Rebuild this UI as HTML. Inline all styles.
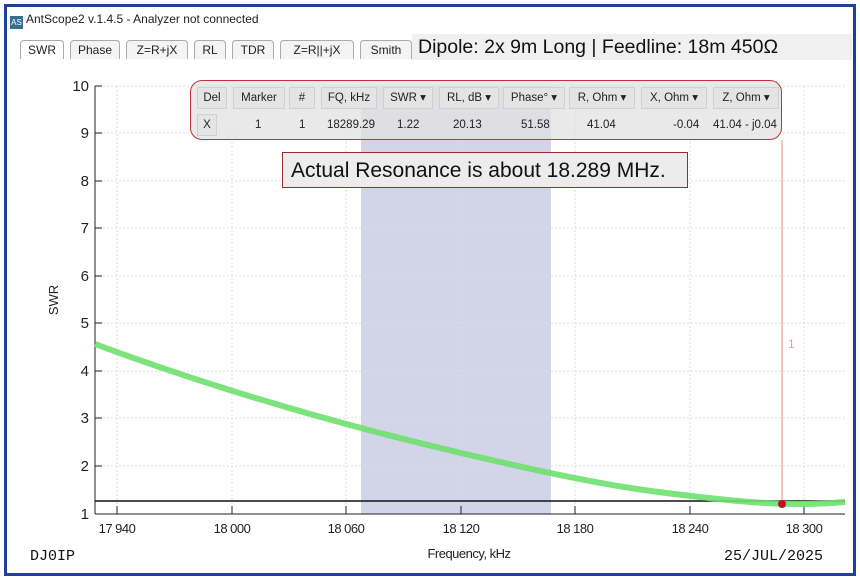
<!DOCTYPE html>
<html><head><meta charset="utf-8"><style>
body{margin:0;width:860px;height:580px;background:#fff;font-family:"Liberation Sans",sans-serif;overflow:hidden;position:relative}
.frame{position:absolute;left:4px;top:4px;width:846px;height:566px;border:3px solid #1f3f99;background:#fff}
.title{position:absolute;left:10px;top:12px;font-size:12px;color:#222}
.ic{display:inline-block;width:13px;height:13px;background:#3a6e8f;color:#fff;font-size:8px;line-height:13px;text-align:center;vertical-align:-2px;margin-right:3px}
.tabs{position:absolute;left:18px;top:40px;height:19px;font-size:12px}
.tab{position:absolute;top:0;height:18px;border:1px solid #aaa;border-bottom:none;border-radius:4px 4px 0 0;background:#f4f4f4;line-height:19px;text-align:center;color:#222}
.head{position:absolute;left:412px;top:34px;width:434px;height:26px;background:#f0f0f0;font-size:19.5px;color:#111;line-height:26px;padding-left:6px;white-space:nowrap;overflow:hidden}
.mt{position:absolute;left:190px;top:80px;width:590px;height:58px;border:1.5px solid #c0303a;border-radius:12px;background:rgba(225,225,225,.75);font-size:11.5px;color:#222}
.h{position:absolute;top:6px;height:20px;background:#e4e4e4;border:1px solid #d0d0d0;line-height:20px;text-align:center}
.v{position:absolute;top:36px;line-height:16px}
.res{position:absolute;left:282px;top:152px;width:406px;height:36px;border:1px solid #9b2a30;background:#ececec;font-size:21px;line-height:36px;padding-left:8px;color:#111;box-sizing:border-box;white-space:nowrap}
.mono{position:absolute;font-family:"Liberation Mono",monospace;font-size:15px;color:#111}
</style></head><body>
<div class="frame"></div>
<div class="title"><span class="ic">AS</span>AntScope2 v.1.4.5 - Analyzer not connected</div>
<div class="tabs">
<div class="tab" style="left:2px;width:42px;background:#fff">SWR</div>
<div class="tab" style="left:52px;width:48px">Phase</div>
<div class="tab" style="left:108px;width:60px">Z=R+jX</div>
<div class="tab" style="left:176px;width:30px">RL</div>
<div class="tab" style="left:214px;width:40px">TDR</div>
<div class="tab" style="left:262px;width:72px">Z=R||+jX</div>
<div class="tab" style="left:342px;width:50px">Smith</div>
</div>
<div class="head">Dipole: 2x 9m Long | Feedline: 18m 450Ω</div>
<svg style="position:absolute;left:0;top:0" width="860" height="580">
<rect x="361" y="86" width="190" height="428" fill="#d2d4e7"/>
<g stroke="#ddd" stroke-dasharray="2,2" stroke-width="1">
<line x1="95" x2="845" y1="86" y2="86"/><line x1="95" x2="845" y1="133" y2="133"/><line x1="95" x2="845" y1="181" y2="181"/><line x1="95" x2="845" y1="228" y2="228"/><line x1="95" x2="845" y1="276" y2="276"/><line x1="95" x2="845" y1="323" y2="323"/><line x1="95" x2="845" y1="371" y2="371"/><line x1="95" x2="845" y1="418" y2="418"/><line x1="95" x2="845" y1="466" y2="466"/>
<line x1="117" x2="117" y1="86" y2="514"/><line x1="232" x2="232" y1="86" y2="514"/><line x1="346" x2="346" y1="86" y2="514"/><line x1="461" x2="461" y1="86" y2="514"/><line x1="575" x2="575" y1="86" y2="514"/><line x1="690" x2="690" y1="86" y2="514"/><line x1="804" x2="804" y1="86" y2="514"/>
</g>
<line x1="95" y1="86" x2="95" y2="514" stroke="#222"/>
<line x1="95" y1="514" x2="845" y2="514" stroke="#222"/>
<g stroke="#222">
<line x1="95" x2="102" y1="86" y2="86"/><line x1="95" x2="102" y1="133" y2="133"/><line x1="95" x2="102" y1="181" y2="181"/><line x1="95" x2="102" y1="228" y2="228"/><line x1="95" x2="102" y1="276" y2="276"/><line x1="95" x2="102" y1="323" y2="323"/><line x1="95" x2="102" y1="371" y2="371"/><line x1="95" x2="102" y1="418" y2="418"/><line x1="95" x2="102" y1="466" y2="466"/>
<line x1="117" x2="117" y1="514" y2="506"/><line x1="232" x2="232" y1="514" y2="506"/><line x1="346" x2="346" y1="514" y2="506"/><line x1="461" x2="461" y1="514" y2="506"/><line x1="575" x2="575" y1="514" y2="506"/><line x1="690" x2="690" y1="514" y2="506"/><line x1="804" x2="804" y1="514" y2="506"/>
</g>
<line x1="95" y1="501" x2="845" y2="501" stroke="#111" stroke-width="1.5"/>
<path d="M95 344 C200 383 320 420 461 453 S640 490 700 497 S800 506 845 502" fill="none" stroke="#6fe06f" stroke-width="6" opacity=".9"/>
<line x1="782" y1="140" x2="782" y2="504" stroke="#e88" stroke-width="1"/>
<circle cx="782" cy="504" r="4" fill="#c0102a"/>
<text x="788" y="348" fill="#e99" font-size="12" font-family="Liberation Sans">1</text>
<g font-family="Liberation Sans" font-size="15" fill="#222" text-anchor="end">
<text x="89" y="91">10</text><text x="89" y="138">9</text><text x="89" y="186">8</text><text x="89" y="233">7</text><text x="89" y="281">6</text><text x="89" y="328">5</text><text x="89" y="376">4</text><text x="89" y="423">3</text><text x="89" y="471">2</text><text x="89" y="519">1</text>
</g>
<g font-family="Liberation Sans" font-size="13" fill="#222" text-anchor="middle" letter-spacing="-0.5">
<text x="117" y="533">17 940</text><text x="232" y="533">18 000</text><text x="346" y="533">18 060</text><text x="461" y="533">18 120</text><text x="575" y="533">18 180</text><text x="690" y="533">18 240</text><text x="804" y="533">18 300</text>
<text x="469" y="558">Frequency, kHz</text>
</g>
<text transform="translate(58,300) rotate(-90)" font-family="Liberation Sans" font-size="13" fill="#222" text-anchor="middle">SWR</text>
</svg>
<div class="mt">
<div class="h" style="left:6px;width:28px">Del</div>
<div class="h" style="left:42px;width:50px">Marker</div>
<div class="h" style="left:98px;width:24px">#</div>
<div class="h" style="left:130px;width:54px">FQ, kHz</div>
<div class="h" style="left:192px;width:48px">SWR ▾</div>
<div class="h" style="left:248px;width:58px">RL, dB ▾</div>
<div class="h" style="left:312px;width:60px">Phase° ▾</div>
<div class="h" style="left:378px;width:64px">R, Ohm ▾</div>
<div class="h" style="left:450px;width:64px">X, Ohm ▾</div>
<div class="h" style="left:522px;width:64px">Z, Ohm ▾</div>
<div class="h" style="left:6px;width:18px;top:33px">X</div>
<div class="v" style="left:64px">1</div>
<div class="v" style="left:108px">1</div>
<div class="v" style="left:136px">18289.29</div>
<div class="v" style="left:206px">1.22</div>
<div class="v" style="left:262px">20.13</div>
<div class="v" style="left:330px">51.58</div>
<div class="v" style="left:396px">41.04</div>
<div class="v" style="left:482px">-0.04</div>
<div class="v" style="left:522px">41.04 - j0.04</div>
</div>
<div class="res">Actual Resonance is about 18.289 MHz.</div>
<div class="mono" style="left:30px;top:548px">DJ0IP</div>
<div class="mono" style="left:724px;top:548px">25/JUL/2025</div>
</body></html>
